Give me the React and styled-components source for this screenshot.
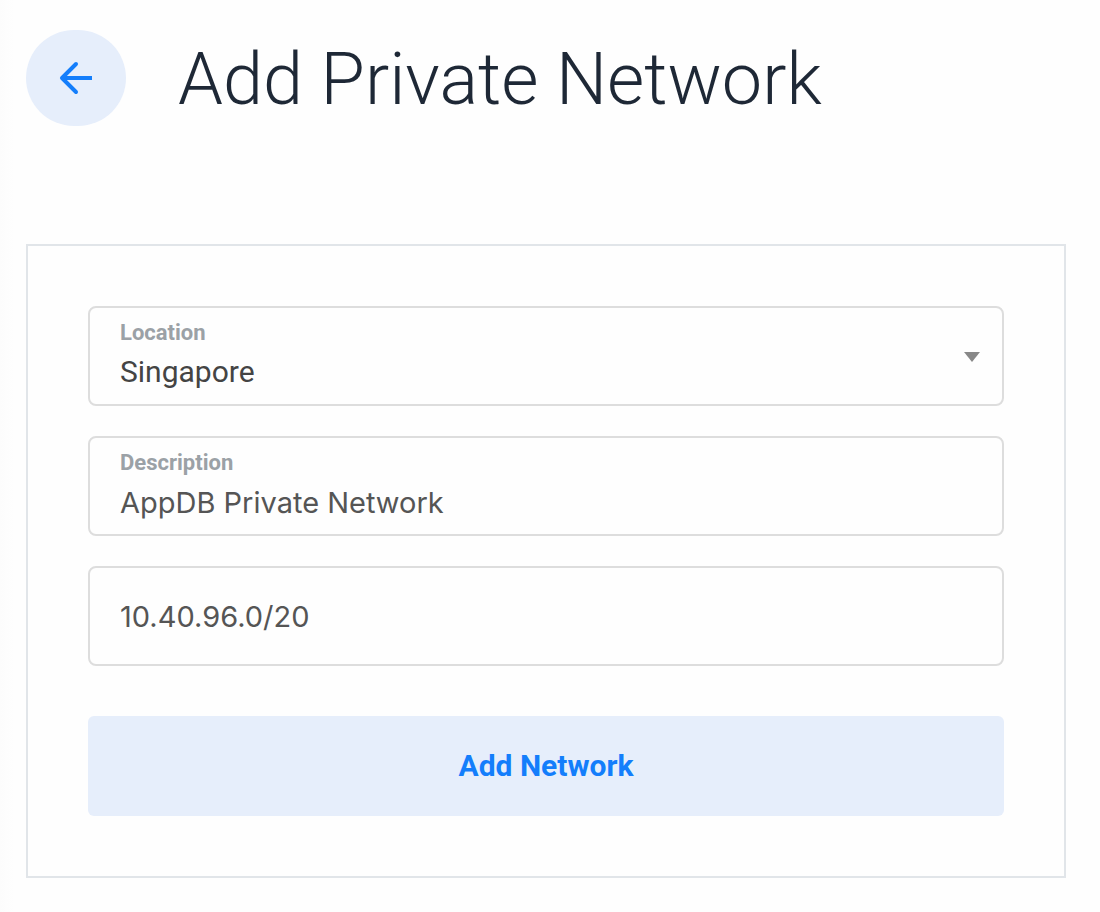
import styled, { createGlobalStyle } from "styled-components";

const GlobalStyle = createGlobalStyle`
  * {
    box-sizing: border-box;
  }

  body {
    margin: 0;
    background: #fefefe linear-gradient(to right, #fcfcfc, #fefefe 14px);
    font-family: Roboto, sans-serif;
  }
`;

const Container = styled.main`
  padding: 30px 34px 34px 26px;
`;

const Header = styled.header`
  display: flex;
  align-items: center;
  gap: 52px;
  margin-bottom: 118px;
`;

const BackButton = styled.button`
  display: flex;
  align-items: center;
  justify-content: center;
  width: 100px;
  height: 96px;
  padding: 0;
  border: 0;
  border-radius: 50px;
  background: #e6eefb;
  color: #147efb;
`;

const Title = styled.h1`
  margin: 0;
  padding-top: 4px;
  color: #1e2836;
  font-size: 72px;
  font-weight: 300;
  line-height: 92px;
`;

const Form = styled.form`
  display: flex;
  flex-direction: column;
  gap: 30px;
  padding: 60px;
  border: 2px solid #e1e5e9;
  background: #fefefe;
`;

const Field = styled.div`
  position: relative;
  display: flex;
  flex-direction: column;
  justify-content: center;
  height: 100px;
  border: 2px solid #ddd;
  border-radius: 8px;
  background: #fefefe;
`;

const Label = styled.label`
  padding: 0 30px;
  color: #9ba1a6;
  font-size: 22px;
  font-weight: 700;
  line-height: 32px;
`;

const Select = styled.select`
  width: 100%;
  height: 46px;
  padding: 0 30px 2px;
  border: 0;
  outline: 0;
  appearance: none;
  background: transparent;
  color: #444;
  font: 400 30px Roboto, sans-serif;
`;

const Input = styled.input`
  width: 100%;
  height: 46px;
  padding: 0 30px;
  border: 0;
  outline: 0;
  background: transparent;
  color: #555;
  font: 400 29px Inter, sans-serif;
`;

const Caret = styled.svg`
  position: absolute;
  top: 44px;
  right: 22px;
  pointer-events: none;
`;

const SubmitButton = styled.button`
  height: 100px;
  margin-top: 20px;
  padding-bottom: 3px;
  border: 0;
  border-radius: 6px;
  background: #e6eefb;
  color: #147efb;
  font: 700 30px Roboto, sans-serif;
`;

const AddPrivateNetwork = () => {
  return (
    <Container>
      <GlobalStyle />
      <Header>
        <BackButton type="button" aria-label="Back">
          <svg
            width="34"
            height="34"
            viewBox="0 0 34 34"
            fill="none"
            stroke="currentColor"
            strokeWidth="4"
          >
            <path d="M33 17H4" />
            <path
              d="M17 3L3 17L17 31"
              strokeLinecap="round"
              strokeLinejoin="round"
            />
          </svg>
        </BackButton>
        <Title>Add Private Network</Title>
      </Header>
      <Form onSubmit={(e) => e.preventDefault()}>
        <Field>
          <Label htmlFor="location">Location</Label>
          <Select id="location" defaultValue="Singapore">
            <option>Singapore</option>
          </Select>
          <Caret width="16" height="10" viewBox="0 0 16 10">
            <path d="M0 0H16L8 10Z" fill="#888" />
          </Caret>
        </Field>
        <Field>
          <Label htmlFor="description">Description</Label>
          <Input id="description" defaultValue="AppDB Private Network" />
        </Field>
        <Field>
          <Input aria-label="IP range" defaultValue="10.40.96.0/20" />
        </Field>
        <SubmitButton>Add Network</SubmitButton>
      </Form>
    </Container>
  );
};

export default AddPrivateNetwork;
